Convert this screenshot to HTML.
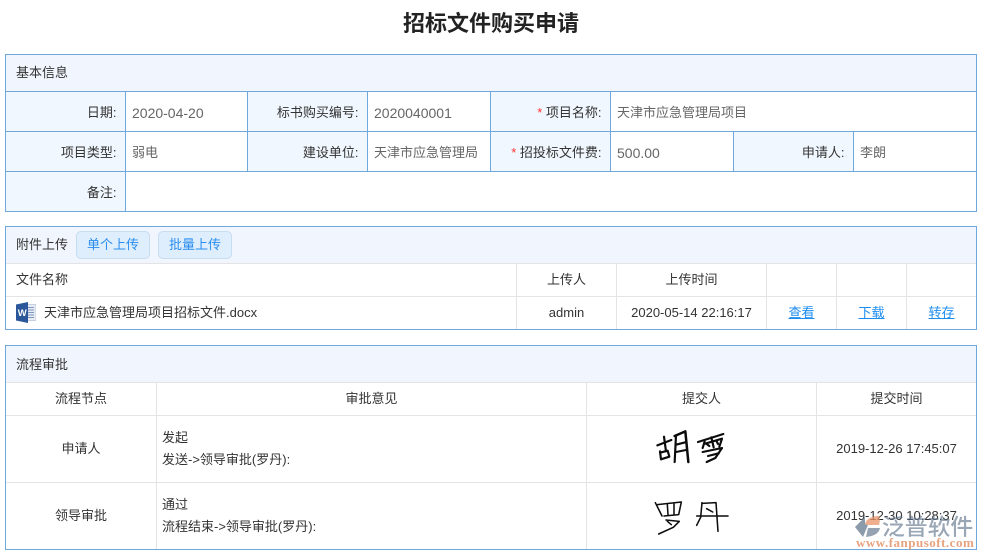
<!DOCTYPE html>
<html lang="zh">
<head>
<meta charset="utf-8">
<title>招标文件购买申请</title>
<style>
html,body{margin:0;padding:0;background:#fff;}
body{width:984px;height:558px;position:relative;overflow:hidden;font-family:"Liberation Sans","Noto Sans CJK SC",sans-serif;font-size:13px;color:#333;}
div{position:absolute;box-sizing:border-box;}
.box{border:1px solid #6fa8dc;background:#fff;}
.hd{background:#f1f6fe;}
.lb{background:#f0f7fe;}
.b{background:#6fa8dc;}
.g{background:#e4e4e4;}
.t{line-height:20px;height:20px;white-space:nowrap;margin-top:1px;}
.r{text-align:right;}
.c{text-align:center;}
.v{color:#666;}
.d{font-size:14px;}
.s{color:#f33;}
.btn{height:28px;width:74px;top:231px;line-height:26px;text-align:center;background:#deeefc;border:1px solid #c6dcf0;border-radius:5px;color:#2a8df0;}
a{color:#1c8cf0;text-decoration:underline;}
</style>
</head>
<body>
<div class="t c" style="left:0;top:9px;width:982px;height:28px;line-height:28px;font-size:22px;font-weight:bold;color:#222;">招标文件购买申请</div>

<!-- 基本信息 -->
<div class="box" style="left:5px;top:54px;width:972px;height:158px;"></div>
<div class="hd" style="left:6px;top:55px;width:970px;height:36px;"></div>
<div class="lb" style="left:6px;top:92px;width:119px;height:119px;"></div>
<div class="lb" style="left:248px;top:92px;width:119px;height:79px;"></div>
<div class="lb" style="left:491px;top:92px;width:119px;height:79px;"></div>
<div class="lb" style="left:734px;top:132px;width:119px;height:39px;"></div>
<div class="b" style="left:6px;top:91px;width:970px;height:1px;"></div>
<div class="b" style="left:6px;top:131px;width:970px;height:1px;"></div>
<div class="b" style="left:6px;top:171px;width:970px;height:1px;"></div>
<div class="b" style="left:125px;top:92px;width:1px;height:119px;"></div>
<div class="b" style="left:247px;top:92px;width:1px;height:79px;"></div>
<div class="b" style="left:367px;top:92px;width:1px;height:79px;"></div>
<div class="b" style="left:490px;top:92px;width:1px;height:79px;"></div>
<div class="b" style="left:610px;top:92px;width:1px;height:79px;"></div>
<div class="b" style="left:733px;top:132px;width:1px;height:39px;"></div>
<div class="b" style="left:853px;top:132px;width:1px;height:39px;"></div>

<div class="t" style="left:16px;top:62px;">基本信息</div>
<div class="t r" style="left:6px;top:102px;width:110.5px;">日期:</div>
<div class="t v d" style="left:132px;top:102px;">2020-04-20</div>
<div class="t r" style="left:248px;top:102px;width:110.5px;">标书购买编号:</div>
<div class="t v d" style="left:374px;top:102px;">2020040001</div>
<div class="t r" style="left:491px;top:102px;width:110.5px;"><span class="s">*</span> 项目名称:</div>
<div class="t v" style="left:617px;top:102px;">天津市应急管理局项目</div>
<div class="t r" style="left:6px;top:142px;width:110.5px;">项目类型:</div>
<div class="t v" style="left:132px;top:142px;">弱电</div>
<div class="t r" style="left:248px;top:142px;width:110.5px;">建设单位:</div>
<div class="t v" style="left:374px;top:142px;">天津市应急管理局</div>
<div class="t r" style="left:491px;top:142px;width:110.5px;"><span class="s">*</span> 招投标文件费:</div>
<div class="t v d" style="left:617px;top:142px;">500.00</div>
<div class="t r" style="left:734px;top:142px;width:110.5px;">申请人:</div>
<div class="t v" style="left:860px;top:142px;">李朗</div>
<div class="t r" style="left:6px;top:182px;width:110.5px;">备注:</div>

<!-- 附件上传 -->
<div class="box" style="left:5px;top:226px;width:972px;height:104px;"></div>
<div class="hd" style="left:6px;top:227px;width:970px;height:36px;"></div>
<div class="g" style="left:6px;top:263px;width:970px;height:1px;"></div>
<div class="g" style="left:6px;top:296px;width:970px;height:1px;"></div>
<div class="g" style="left:516px;top:264px;width:1px;height:65px;"></div>
<div class="g" style="left:616px;top:264px;width:1px;height:65px;"></div>
<div class="g" style="left:766px;top:264px;width:1px;height:65px;"></div>
<div class="g" style="left:836px;top:264px;width:1px;height:65px;"></div>
<div class="g" style="left:906px;top:264px;width:1px;height:65px;"></div>

<div class="t" style="left:16px;top:234px;">附件上传</div>
<div class="btn" style="left:76px;">单个上传</div>
<div class="btn" style="left:158px;">批量上传</div>
<div class="t" style="left:16px;top:269px;">文件名称</div>
<div class="t c" style="left:517px;top:269px;width:99px;">上传人</div>
<div class="t c" style="left:617px;top:269px;width:149px;">上传时间</div>
<div class="t" style="left:44px;top:302px;">天津市应急管理局项目招标文件.docx</div>
<div class="t c" style="left:517px;top:302px;width:99px;">admin</div>
<div class="t c" style="left:617px;top:302px;width:149px;">2020-05-14 22:16:17</div>
<div class="t c" style="left:767px;top:302px;width:69px;"><a>查看</a></div>
<div class="t c" style="left:837px;top:302px;width:69px;"><a>下载</a></div>
<div class="t c" style="left:907px;top:302px;width:69px;"><a>转存</a></div>

<svg style="position:absolute;left:16px;top:302px;" width="20" height="21" viewBox="0 0 20 21">
<rect x="9" y="2.5" width="11" height="16" fill="#e6ebf4" stroke="#a9b8d3" stroke-width=".6"/>
<path d="M11 5.5h7M11 8h7M11 10.5h7M11 13h7M11 15.5h7" stroke="#7f96c0" stroke-width="1"/>
<path d="M0 2.5 12 0V21L0 18.5Z" fill="#2b579a"/>
<text x="1.8" y="14" font-family="Liberation Sans" font-size="9.5" font-weight="bold" fill="#fff">W</text>
</svg>

<!-- 流程审批 -->
<div class="box" style="left:5px;top:345px;width:972px;height:205px;"></div>
<div class="hd" style="left:6px;top:346px;width:970px;height:36px;"></div>
<div class="g" style="left:6px;top:382px;width:970px;height:1px;"></div>
<div class="g" style="left:6px;top:415px;width:970px;height:1px;"></div>
<div class="g" style="left:6px;top:482px;width:970px;height:1px;"></div>
<div class="g" style="left:156px;top:383px;width:1px;height:166px;"></div>
<div class="g" style="left:586px;top:383px;width:1px;height:166px;"></div>
<div class="g" style="left:816px;top:383px;width:1px;height:166px;"></div>

<div class="t" style="left:16px;top:354px;">流程审批</div>
<div class="t c" style="left:6px;top:388px;width:150px;">流程节点</div>
<div class="t c" style="left:157px;top:388px;width:429px;">审批意见</div>
<div class="t c" style="left:587px;top:388px;width:229px;">提交人</div>
<div class="t c" style="left:817px;top:388px;width:159px;">提交时间</div>
<div class="t c" style="left:6px;top:438px;width:150px;">申请人</div>
<div class="t" style="left:162px;top:427px;">发起</div>
<div class="t" style="left:162px;top:449px;">发送-&gt;领导审批(罗丹):</div>
<div class="t c" style="left:817px;top:438px;width:159px;">2019-12-26 17:45:07</div>
<div class="t c" style="left:6px;top:505px;width:150px;">领导审批</div>
<div class="t" style="left:162px;top:494px;">通过</div>
<div class="t" style="left:162px;top:516px;">流程结束-&gt;领导审批(罗丹):</div>
<div class="t c" style="left:817px;top:505px;width:159px;">2019-12-30 10:28:37</div>

<!-- 手写签名 -->
<svg style="position:absolute;left:580px;top:410px;" width="240" height="148" viewBox="0 0 720 444">
<g fill="none" stroke="#0c0c0c" stroke-linecap="round" stroke-linejoin="round" stroke-width="6.5">
<path d="M232 106 274 90"/>
<path d="M252 80 258 124"/>
<path d="M240 124 243 148 268 140 263 122 240 128"/>
<path d="M288 76 284 156"/>
<path d="M284 78 316 64 325 156" stroke-width="7.5"/>
<path d="M288 104 316 97M288 126 318 120"/>
<path d="M354 96 430 72"/>
<path d="M374 94 368 114M372 102 426 86 418 110"/>
<path d="M394 82 401 112M380 102 388 108M410 94 414 102"/>
<path d="M368 126 426 114 406 144 380 156"/>
<path d="M384 138 416 130"/>
</g>
<g fill="none" stroke="#0c0c0c" stroke-linecap="round" stroke-linejoin="round" stroke-width="4.6">
<path d="M226 278 246 318"/>
<path d="M232 284 304 276 296 314 252 318"/>
<path d="M262 284 264 314M282 282 282 312"/>
<path d="M258 330 298 334 280 352 236 372"/>
<path d="M262 334 274 344"/>
<path d="M366 278 362 322 350 346"/>
<path d="M366 280 408 278 414 364"/>
<path d="M350 318 444 318"/>
<path d="M380 296 398 306"/>
</g>
</svg>

<!-- 水印 -->
<svg style="position:absolute;left:853px;top:513px;" width="30" height="26" viewBox="0 0 30 26">
<path d="M12 4 2 14 10 24 15 12 12 11Z" fill="#5b7088" opacity=".7"/>
<path d="M12 11C13 6 19 3 26 3 27 6 27 9 26 12L15 12Z" fill="#e99468" opacity=".75"/>
<path d="M15 15H27C26 20 22 23 13 24Z" fill="#5b7088" opacity=".65"/>
</svg>
<div class="t" style="left:882px;top:512px;height:26px;line-height:26px;font-size:22.8px;font-weight:500;color:#5b7088;opacity:.62;font-family:'Noto Sans CJK SC',sans-serif;">泛普软件</div>
<div class="t" style="left:856px;top:532px;font-family:'Liberation Serif',serif;font-weight:bold;font-size:13px;letter-spacing:.5px;color:#e59a72;opacity:.9;">www.fanpusoft.com</div>
</body>
</html>
